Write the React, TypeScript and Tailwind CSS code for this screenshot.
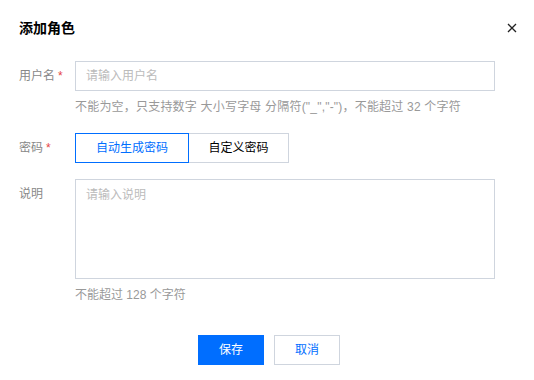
import React from "react";

export default function App() {
  const font = {
    fontFamily: '"Liberation Sans", "Noto Sans CJK SC", sans-serif',
  };
  return (
    <div
      className="w-[534px] h-[380px] bg-white pl-[19px] pr-[17px] pt-[18px] text-[#000]"
      style={font}
    >
      <div className="flex items-center justify-between h-5">
        <div className="text-sm font-bold leading-5">添加角色</div>
        <svg width="10" height="10" viewBox="0 0 10 10">
          <path d="M1 1 L9 9 M9 1 L1 9" stroke="#222" strokeWidth="1.3" />
        </svg>
      </div>

      <div className="mt-[23px] flex">
        <div className="w-14 text-xs leading-[30px] text-[#888]">
          用户名<span className="ml-[3px] text-[#e54545]">*</span>
        </div>
        <input
          className="w-[420px] h-[30px] border border-[#cfd5de] px-[10px] text-xs outline-none placeholder:text-[#bbb]"
          placeholder="请输入用户名"
        />
      </div>
      <div className="ml-14 mt-[6px] text-xs leading-5 text-[#999] tracking-[0.2px]">
        不能为空，只支持数字 大小写字母 分隔符("_","-")，不能超过 32 个字符
      </div>

      <div className="mt-4 flex">
        <div className="w-14 text-xs leading-[30px] text-[#888]">
          密码<span className="ml-[3px] text-[#e54545]">*</span>
        </div>
        <div className="flex">
          <div className="w-[114px] h-[30px] border border-[#006eff] text-[#006eff] text-xs flex items-center justify-center">
            自动生成密码
          </div>
          <div className="w-[100px] h-[30px] border border-l-0 border-[#cfd5de] text-[#000] text-xs flex items-center justify-center">
            自定义密码
          </div>
        </div>
      </div>

      <div className="mt-4 flex">
        <div className="w-14 pt-[6px] text-xs leading-[18px] text-[#888]">说明</div>
        <textarea
          className="w-[420px] h-[100px] border border-[#cfd5de] px-[10px] py-[6px] text-xs leading-[18px] outline-none resize-none placeholder:text-[#bbb]"
          placeholder="请输入说明"
        />
      </div>
      <div className="ml-14 mt-[6px] text-xs leading-5 text-[#999]">
        不能超过 128 个字符
      </div>

      <div className="mt-[30px] flex justify-center gap-[10px] pl-[2px]">
        <button className="w-[66px] h-[30px] bg-[#006eff] text-white text-xs">
          保存
        </button>
        <button className="w-[66px] h-[30px] border border-[#cfd5de] text-[#006eff] text-xs bg-white">
          取消
        </button>
      </div>
    </div>
  );
}
